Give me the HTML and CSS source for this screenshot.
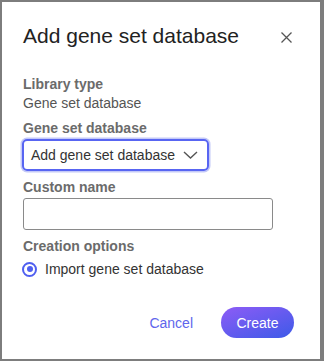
FILE: index.html
```html
<!DOCTYPE html>
<html lang="en">

<head>
    <meta charset="UTF-8">
    <meta name="viewport" content="width=device-width, initial-scale=1.0">
    <title>Add gene set database</title>
    <link rel="stylesheet" href="styles.css">
</head>

<body>
    <div class="dialog">
        <div class="dialog-header">
            <h1>Add gene set database</h1>
            <button class="close" type="button" aria-label="Close">
                <svg width="11" height="11" viewBox="0 0 11 11">
                    <path d="M0.5 0.5 L10.5 10.5 M10.5 0.5 L0.5 10.5" stroke="#555" stroke-width="1.3" fill="none" />
                </svg>
            </button>
        </div>

        <div class="dialog-body">
            <div class="field">
                <span class="label">Library type</span>
                <span class="value">Gene set database</span>
            </div>

            <div class="field">
                <label class="label" for="db">Gene set database</label>
                <div class="select" id="db">
                    <span>Add gene set database</span>
                    <svg width="15" height="8" viewBox="0 0 15 8">
                        <path d="M1 1 L7.5 7 L14 1" stroke="#555" stroke-width="1.4" fill="none" />
                    </svg>
                </div>
            </div>

            <div class="field">
                <label class="label" for="name">Custom name</label>
                <input type="text" id="name">
            </div>

            <div class="field">
                <span class="label">Creation options</span>
                <label class="radio">
                    <span class="radio-dot"></span>
                    Import gene set database
                </label>
            </div>
        </div>

        <div class="dialog-footer">
            <button class="link-button" type="button">Cancel</button>
            <button class="primary" type="button">Create</button>
        </div>
    </div>
</body>

</html>
```

FILE: styles.css
```css
body {
    margin: 0;
    padding: 2px 4px 2px 2px;
    background-color: #7d7d7d;
    font-family: "Liberation Sans", Arial, sans-serif;
    color: #333;
}

.dialog {
    background-color: #fff;
    height: 357px;
    box-sizing: border-box;
    padding: 0 28px 0 21px;
    display: flex;
    flex-direction: column;
}

.dialog-header {
    display: flex;
    align-items: center;
    justify-content: space-between;
    padding-top: 20px;
}

h1 {
    margin: 0;
    font-size: 21px;
    font-weight: normal;
    color: #222;
    line-height: 28px;
}

.close {
    border: none;
    background: none;
    padding: 0;
    width: 11px;
    height: 11px;
    margin-top: 3px;
    display: flex;
}

.dialog-body {
    padding-top: 25px;
}

.field {
    display: flex;
    flex-direction: column;
    align-items: flex-start;
    margin-bottom: 7px;
}

.label {
    font-size: 14px;
    font-weight: bold;
    color: #6b6b6b;
    line-height: 19px;
    margin-bottom: 1px;
}

.value {
    font-size: 14px;
    color: #555;
    line-height: 19px;
    margin-top: -1px;
    margin-bottom: -1px;
}

.select {
    width: 187px;
    height: 32px;
    box-sizing: border-box;
    border: 2px solid #5865f2;
    border-radius: 5px;
    box-shadow: 0 0 0 1.5px #c4c9f8;
    display: flex;
    align-items: center;
    justify-content: space-between;
    padding: 0 9px 0 7px;
    font-size: 14px;
    color: #333;
    margin-left: -1px;
}

input {
    margin: 0;
    width: 250px;
    height: 32px;
    box-sizing: border-box;
    border: 1px solid #8a8a8a;
    border-radius: 3px;
}

.radio {
    display: flex;
    align-items: center;
    gap: 8px;
    font-size: 14px;
    color: #333;
    line-height: 22px;
    margin-left: -1px;
    margin-top: 1px;
}

.radio-dot {
    width: 15px;
    height: 15px;
    box-sizing: border-box;
    border: 2px solid #4f5ff0;
    border-radius: 50%;
    display: flex;
    align-items: center;
    justify-content: center;
}

.radio-dot::after {
    content: "";
    width: 6px;
    height: 6px;
    border-radius: 50%;
    background-color: #4f5ff0;
}

.dialog-footer {
    margin-top: auto;
    padding-bottom: 21px;
    display: flex;
    justify-content: flex-end;
    align-items: center;
    gap: 28px;
    margin-right: -2px;
}

.link-button {
    border: none;
    background: none;
    padding: 0;
    font-family: inherit;
    font-size: 14px;
    color: #6066ec;
}

.primary {
    width: 73px;
    height: 31px;
    border: none;
    border-radius: 16px;
    background: linear-gradient(160deg, #8d5cf6, #3d5ae8);
    color: #fff;
    font-family: inherit;
    font-size: 14px;
}
```
